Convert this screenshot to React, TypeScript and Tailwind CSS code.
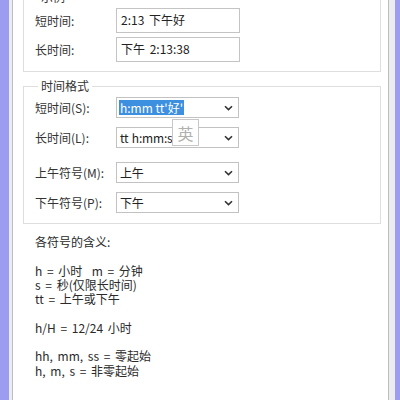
import React from "react";

const font = { fontFamily: '"Noto Sans CJK SC", "Noto Sans", sans-serif' };

function Chevron() {
  return (
    <svg width="9" height="6" viewBox="0 0 9 6" className="shrink-0">
      <path d="M1 1.2 L4.5 4.6 L8 1.2" fill="none" stroke="#333" strokeWidth="1.6" />
    </svg>
  );
}

function TextRow({ label, value, first }: { label: string; value: string; first?: boolean }) {
  return (
    <div className={`flex items-center ${first ? "" : "mt-[4px]"}`}>
      <span className="w-[81px] text-[#333]">{label}</span>
      <div className="h-[25px] w-[124px] border border-[#c4c4c4] bg-white px-[4px] pt-[2px] text-[#222] [word-spacing:2px]">
        {value}
      </div>
    </div>
  );
}

function ComboRow({
  label,
  value,
  selected,
  className,
}: {
  label: string;
  value: string;
  selected?: boolean;
  className?: string;
}) {
  return (
    <div className={`flex items-center ${className ?? ""}`}>
      <span className="w-[81px] text-[#333]">{label}</span>
      <div className="flex h-[21px] w-[123px] items-center justify-between border border-[#c2c2c2] bg-white pl-[2px] pr-[5px]">
        {selected ? (
          <span className="bg-[#3d8fe0] px-[1px] leading-[15px] text-white">{value}</span>
        ) : (
          <span className="pl-[1px] tracking-[-0.2px] text-[#222] [word-spacing:1px]">{value}</span>
        )}
        <Chevron />
      </div>
    </div>
  );
}

export default function App() {
  return (
    <div className="flex h-[400px] w-[400px] overflow-hidden bg-white text-[12px]" style={font}>
      {/* left window edge */}
      <div className="w-[9px] bg-[#9c9cf0]" />
      <div className="w-[4px] border-r border-[#bdbdbd] bg-[#ebebf2]" />

      <div className="relative flex-1 overflow-hidden pl-[10px] pr-[7px]">
        {/* sample box, top cut off */}
        <fieldset className="mt-[-11px] border border-[#dedede] px-[11px] pb-[9px]">
          <legend className="ml-[3px] px-[3px] leading-[16px] text-[#333]">示例</legend>
          <div className="pt-[3px]">
            <TextRow first label="短时间:" value="2:13 下午好" />
            <TextRow label="长时间:" value="下午 2:13:38" />
          </div>
        </fieldset>

        <fieldset className="mt-[6px] border border-[#dedede] px-[11px] pb-[10px]">
          <legend className="ml-[3px] px-[3px] leading-[16px] text-[#333]">时间格式</legend>
          <div className="pt-[3px]">
            <ComboRow label="短时间(S):" value="h:mm tt'好'" selected />
            <ComboRow label="长时间(L):" value="tt h:mm:ss" className="mt-[9px]" />
            <ComboRow label="上午符号(M):" value="上午" className="mt-[14px]" />
            <ComboRow label="下午符号(P):" value="下午" className="mt-[9px]" />
          </div>
        </fieldset>

        {/* IME indicator floating over the combo */}
        <div className="absolute left-[159px] top-[119px] flex h-[27px] w-[27px] items-center justify-center border border-[#c8c8c8] bg-white text-[16px] text-[#b0b0b0]">
          英
        </div>

        <div className="mt-[11px] whitespace-pre pl-[12px] leading-[14.3px] text-[#2a2a2a] [word-spacing:2px]">
          <p>各符号的含义:</p>
          <p> </p>
          <p>h = 小时  m = 分钟</p>
          <p>s = 秒(仅限长时间)</p>
          <p>tt = 上午或下午</p>
          <p> </p>
          <p>h/H = 12/24 小时</p>
          <p> </p>
          <p>hh, mm, ss = 零起始</p>
          <p>h, m, s = 非零起始</p>
        </div>
      </div>

      {/* right window edge */}
      <div className="w-[7px] border-l border-[#bdbdbd] bg-[#ebebf2]" />
      <div className="w-[5px] bg-[#9c9cf0]" />
    </div>
  );
}
